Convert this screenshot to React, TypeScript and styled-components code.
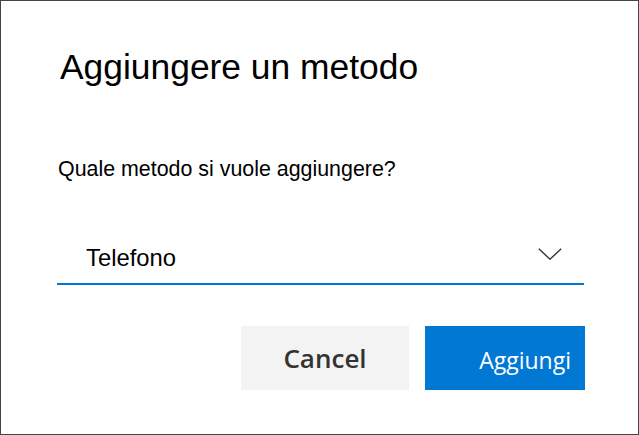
import React from 'react';
import styled, { createGlobalStyle } from 'styled-components';

const GlobalStyle = createGlobalStyle`
  html, body {
    margin: 0;
    padding: 0;
    background: #ffffff;
  }
  body {
    font-family: "Liberation Sans", Arial, sans-serif;
  }
`;

const Dialog = styled.div`
  box-sizing: border-box;
  width: 639px;
  height: 435px;
  border: 1px solid #444444;
  background: #ffffff;
  padding: 46px 53px 0 56px;
  display: flex;
  flex-direction: column;
`;

const Title = styled.h1`
  margin: 0 0 0 3px;
  font-size: 35.4px;
  line-height: 40px;
  font-weight: 400;
  color: #000000;
`;

const Question = styled.p`
  margin: 70px 0 0 1px;
  font-size: 21.4px;
  line-height: 24px;
  color: #000000;
`;

const SelectBox = styled.div`
  margin-top: 59px;
  width: 527px;
  box-sizing: border-box;
  display: flex;
  align-items: flex-start;
  justify-content: space-between;
  padding: 4px 22px 11px 29px;
  border-bottom: 2px solid #0078d4;
  cursor: pointer;
`;

const SelectValue = styled.span`
  font-size: 23.8px;
  line-height: 28px;
  color: #000000;
`;

const Chevron = styled.svg`
  margin-top: 4px;
  flex-shrink: 0;
`;

const Actions = styled.div`
  margin-top: 41px;
  display: flex;
  justify-content: flex-end;
  gap: 16px;
`;

const Button = styled.button<{ $primary?: boolean; $width: number }>`
  box-sizing: border-box;
  width: ${(p) => p.$width}px;
  height: 64px;
  border: none;
  margin: 0;
  display: flex;
  align-items: center;
  justify-content: ${(p) => (p.$primary ? 'flex-end' : 'center')};
  padding: ${(p) => (p.$primary ? '4px 14px 0 0' : '0')};
  font-family: "Open Sans", "Noto Sans", sans-serif;
  font-size: ${(p) => (p.$primary ? '23px' : '26px')};
  font-weight: ${(p) => (p.$primary ? 400 : 600)};
  background: ${(p) => (p.$primary ? '#0078d4' : '#f3f3f3')};
  color: ${(p) => (p.$primary ? '#ffffff' : '#333333')};
  cursor: pointer;
`;

export default function App() {
  return (
    <>
      <GlobalStyle />
      <Dialog>
        <Title>Aggiungere un metodo</Title>
        <Question>Quale metodo si vuole aggiungere?</Question>
        <SelectBox>
          <SelectValue>Telefono</SelectValue>
          <Chevron width="24" height="12" viewBox="0 0 24 12" fill="none">
            <path d="M0.8 0.8L12 11.2L23.2 0.8" stroke="#333333" strokeWidth="1.4" />
          </Chevron>
        </SelectBox>
        <Actions>
          <Button $width={168}>Cancel</Button>
          <Button $primary $width={160}>Aggiungi</Button>
        </Actions>
      </Dialog>
    </>
  );
}
